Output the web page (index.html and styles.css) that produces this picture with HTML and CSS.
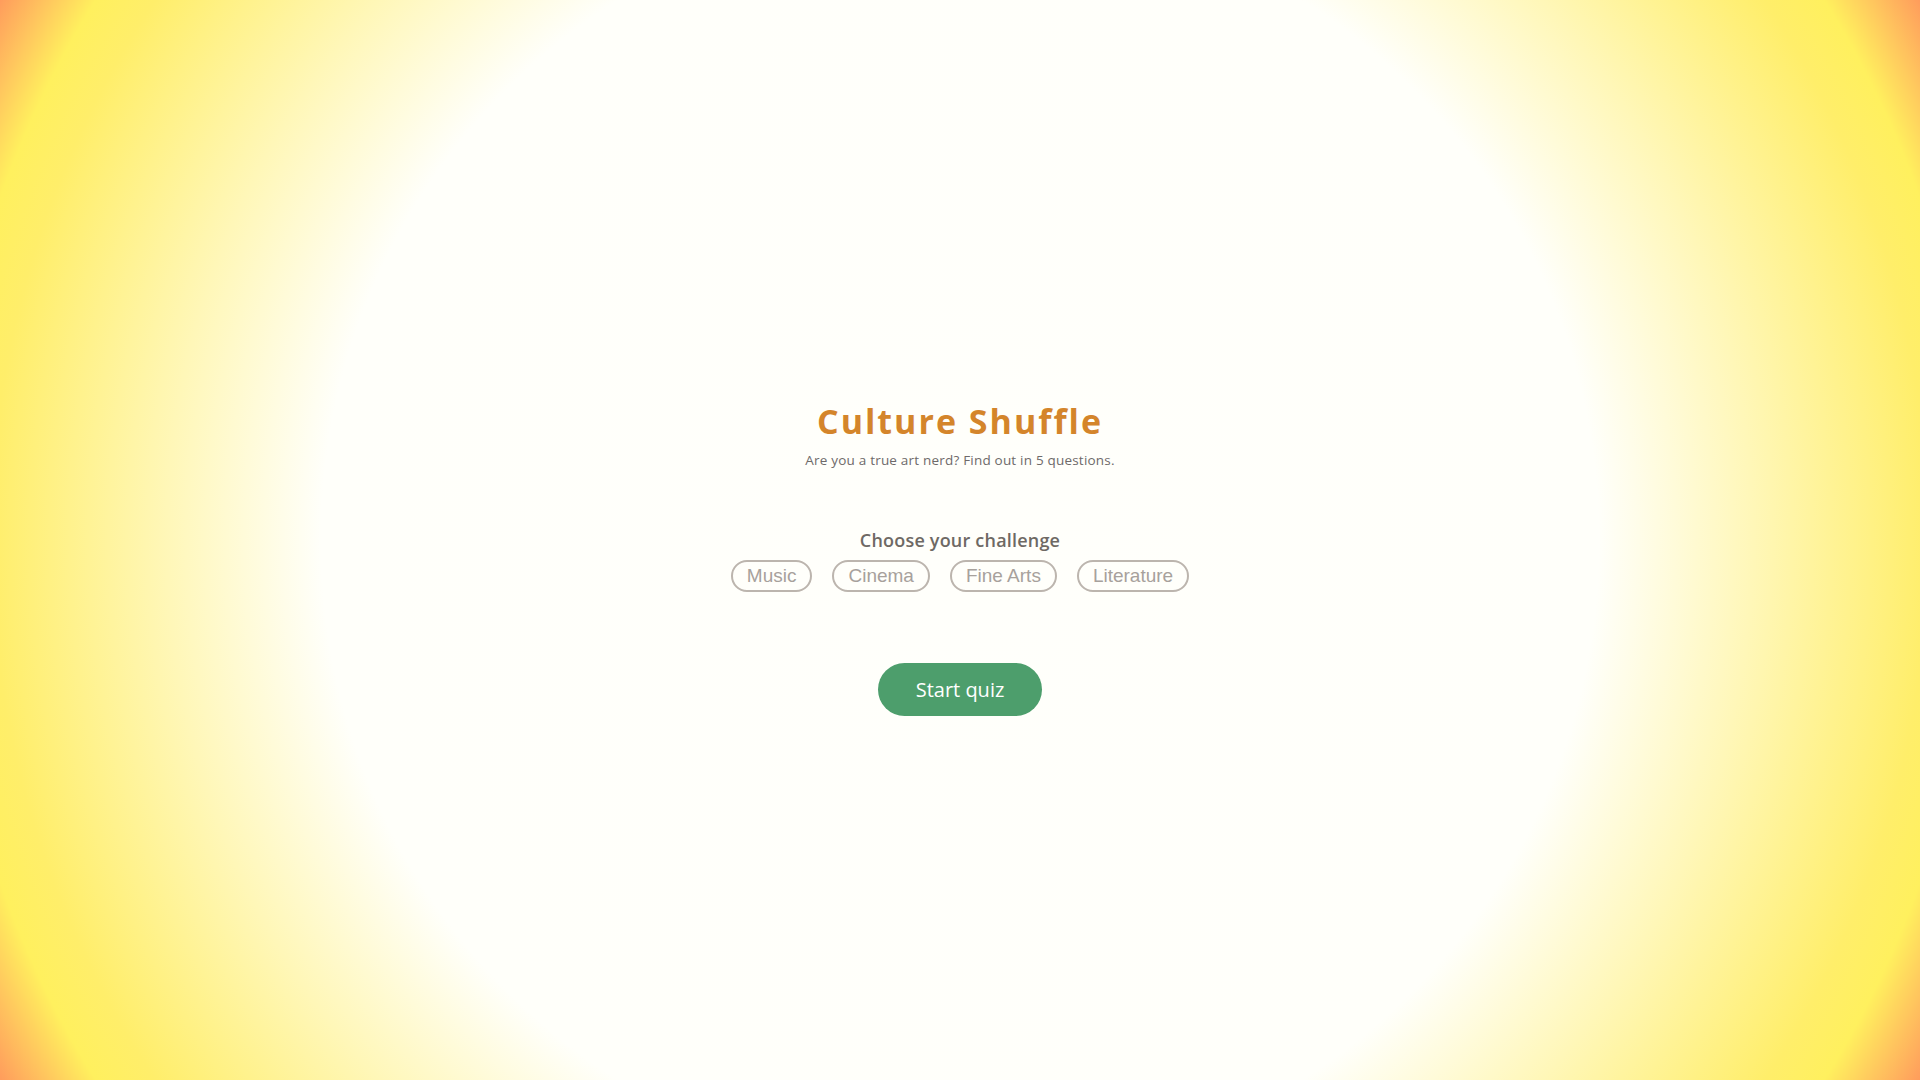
FILE: index.html
```html
<!DOCTYPE html>
<html lang="en">
<head>
<meta charset="utf-8">
<title>Culture Shuffle</title>
<link rel="stylesheet" href="styles.css">
</head>
<body>
<main class="page">
  <section class="intro">
    <h1 class="title">Culture Shuffle</h1>
    <p class="subtitle">Are you a true art nerd? Find out in 5 questions.</p>
  </section>
  <section class="challenge">
    <h2 class="challenge-label">Choose your challenge</h2>
    <div class="pills">
      <button class="pill">Music</button>
      <button class="pill">Cinema</button>
      <button class="pill">Fine Arts</button>
      <button class="pill">Literature</button>
    </div>
  </section>
  <button class="start">Start quiz</button>
</main>
</body>
</html>
```
FILE: styles.css
```css
html, body {
  margin: 0;
  padding: 0;
  height: 100%;
}
body {
  background: radial-gradient(circle farthest-corner at 50% 50%, #fffffb 0%, #fffffa 58%, #fff7b8 72%, #ffee6a 88%, #fff05e 92.5%, #ffc35e 96.5%, #ff9c5c 100%);
  font-family: "Open Sans", "Liberation Sans", sans-serif;
}
.page {
  min-height: 100vh;
  display: flex;
  flex-direction: column;
  align-items: center;
  padding-top: 398px;
  box-sizing: border-box;
}
.intro {
  display: flex;
  flex-direction: column;
  align-items: center;
}
.title {
  margin: 0;
  font-size: 34px;
  line-height: 46px;
  font-weight: 700;
  letter-spacing: 2px;
  color: #d4852b;
}
.subtitle {
  margin: 7px 0 0;
  font-size: 13.5px;
  line-height: 18px;
  color: #6e6a6a;
  letter-spacing: 0.2px;
}
.challenge {
  margin-top: 59px;
  display: flex;
  flex-direction: column;
  align-items: center;
}
.challenge-label {
  margin: 0;
  font-size: 18px;
  line-height: 24px;
  font-weight: 600;
  color: #6e6964;
  letter-spacing: 0.2px;
}
.pills {
  display: flex;
  gap: 20px;
  margin-top: 8px;
}
.pill {
  font-family: "Liberation Sans", Arial, sans-serif;
  font-size: 19px;
  color: #a7a19c;
  background: transparent;
  border: 2px solid #bcb5ae;
  border-radius: 16px;
  height: 32px;
  padding: 0 14px;
  line-height: 28px;
}
.start {
  margin-top: 71px;
  width: 164px;
  height: 53px;
  border: none;
  border-radius: 27px;
  background: #4d9e6c;
  color: #ffffff;
  font-family: "Open Sans", sans-serif;
  font-size: 20px;
}
```
